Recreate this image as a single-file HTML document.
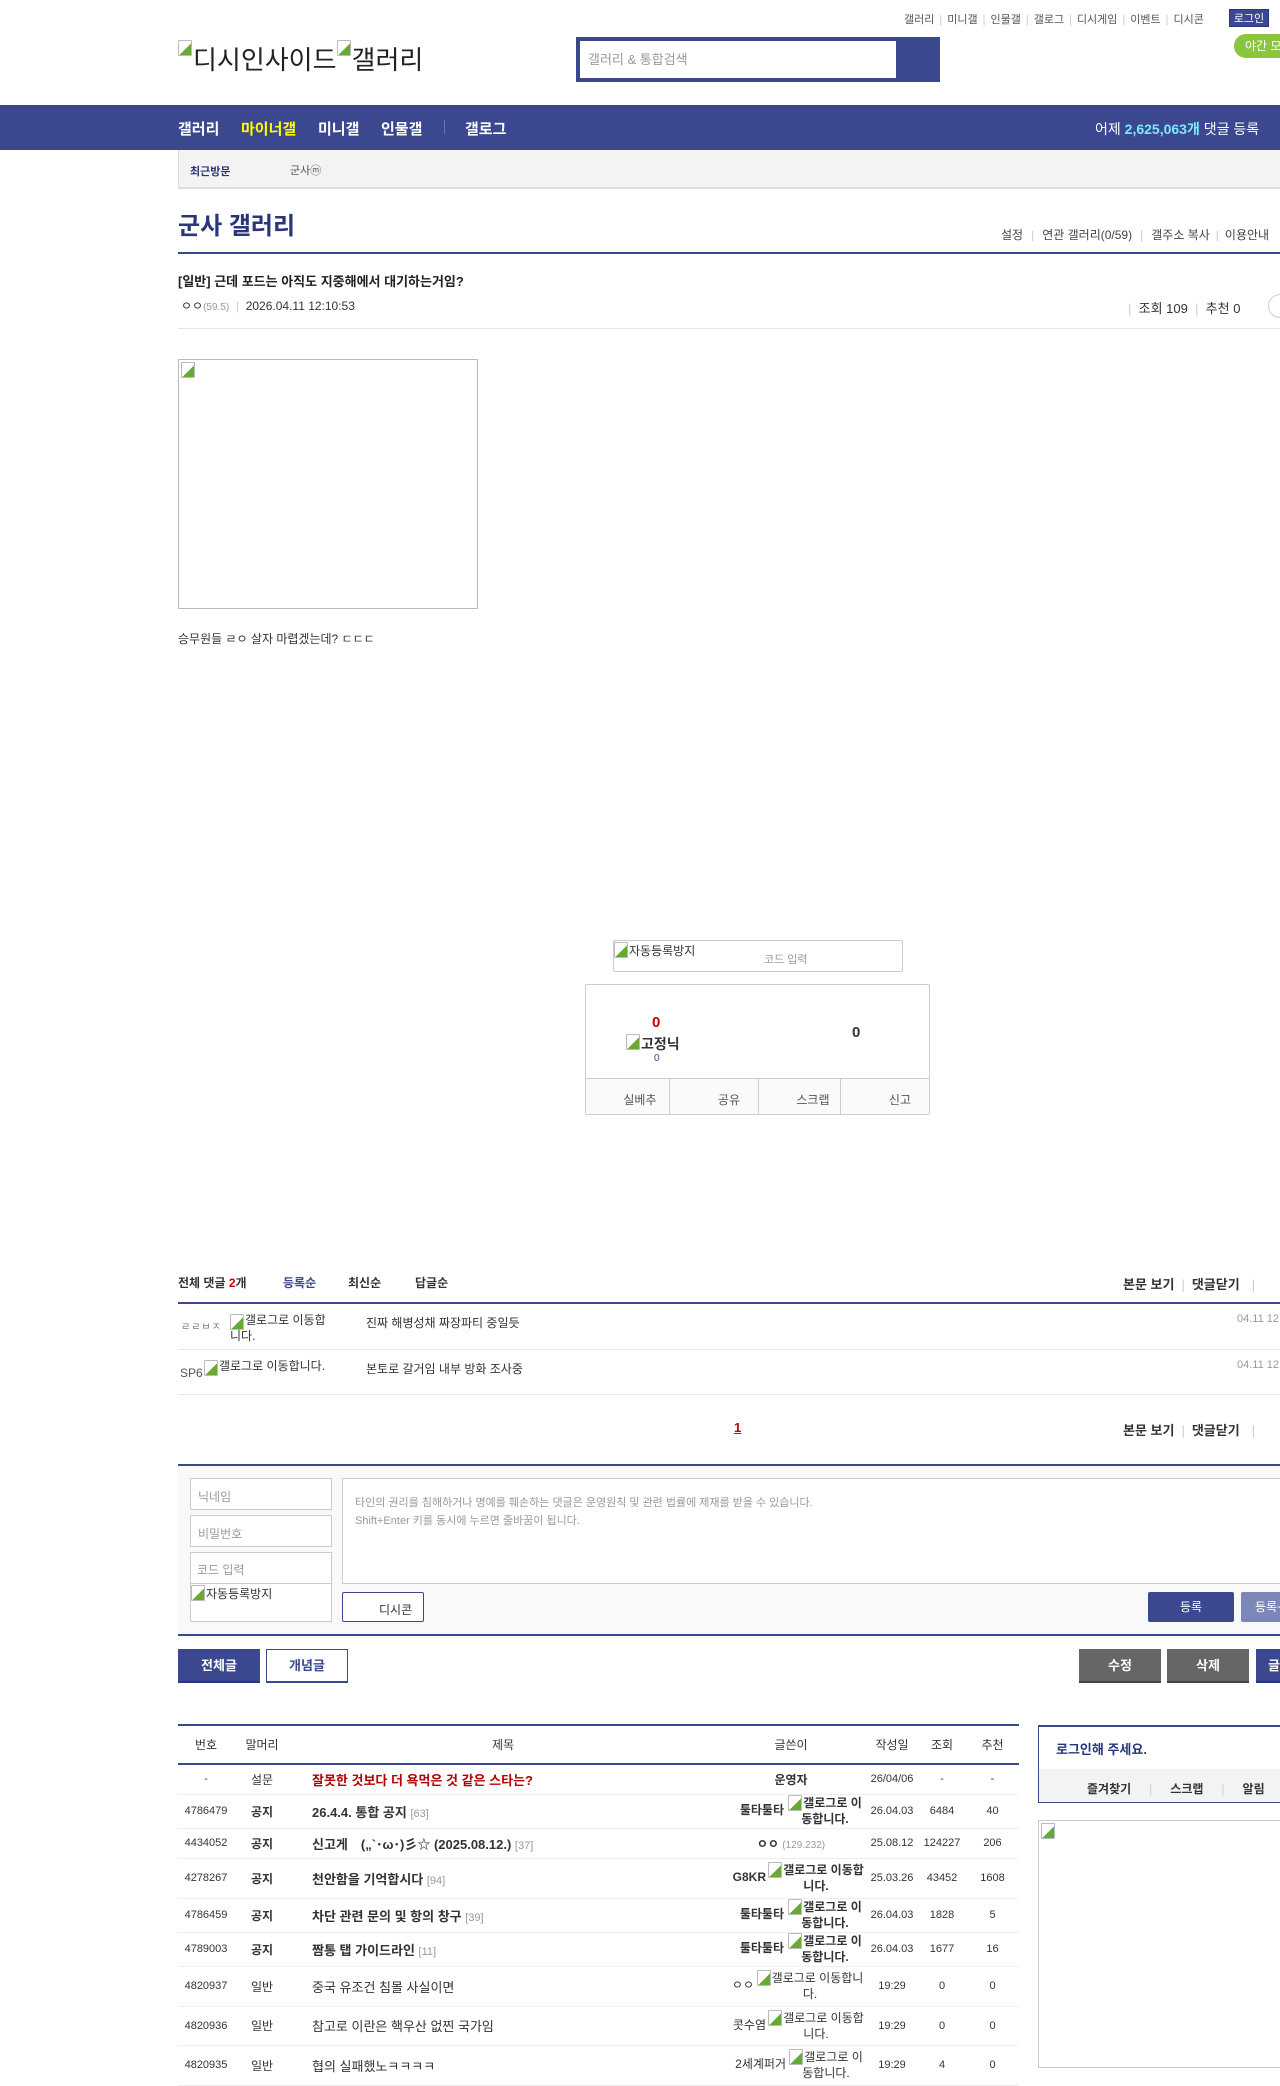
<!DOCTYPE html>
<html><head><meta charset="utf-8">
<style>
*{margin:0;padding:0;box-sizing:border-box}
body{width:1280px;height:2084px;overflow:hidden;position:relative;background:#fff;font-family:"Liberation Sans","Noto Sans CJK KR",sans-serif;color:#333;font-size:12px}
.a{position:absolute;white-space:nowrap}
.bi{display:inline-block;width:14px;height:16px;border:1px solid #bbb;border-radius:1px;vertical-align:top;margin-right:1px;background:linear-gradient(135deg,#fff 55%,#6a3 56%)}
.line{position:absolute;left:178px;right:0;height:2px;background:#3b4890}
.gl{position:absolute;left:178px;right:0;height:1px;background:#e5e5e5}
table{border-collapse:collapse;white-space:normal}
td{font-size:11px;color:#333;text-align:center;border-bottom:1px solid #eee;padding:0}
th{font-size:12px;font-weight:normal;color:#333;height:38px}
.tt{text-align:left;font-size:13px;padding-left:22px}
.b{font-weight:bold}
.wr{font-size:12px}
.g{display:inline-block;width:82px;text-align:center;vertical-align:middle;line-height:16px;font-size:12px}
.s{color:#ccc;font-weight:normal;margin:0 5px}
</style></head><body>
<!-- top links -->
<div class="a" style="left:904px;top:11px;font-size:11px;color:#555">갤러리<span class="s" style="margin:0 5px">|</span>미니갤<span class="s" style="margin:0 5px">|</span>인물갤<span class="s" style="margin:0 5px">|</span>갤로그<span class="s" style="margin:0 5px">|</span>디시게임<span class="s" style="margin:0 5px">|</span>이벤트<span class="s" style="margin:0 5px">|</span>디시콘</div>
<div class="a" style="left:1229px;top:9px;width:40px;height:18px;background:#3b4890;color:#fff;font-size:11px;text-align:center;line-height:18px;border:1px solid #29367c">로그인</div>
<div class="a" style="left:1234px;top:34px;width:60px;height:24px;background:#8bc53f;color:#fff;border-radius:12px;font-size:12px;line-height:24px;padding-left:11px">야간 모드</div>
<!-- logo -->
<div class="a" style="left:178px;top:40px;font-size:26px;color:#222"><span class="bi"></span>디시인사이드<span class="bi"></span>갤러리</div>
<!-- search -->
<div class="a" style="left:576px;top:37px;width:364px;height:45px;background:#3b4890"></div>
<div class="a" style="left:580px;top:41px;width:316px;height:37px;background:#fff;color:#999;font-size:13px;line-height:37px;padding-left:8px">갤러리 &amp; 통합검색</div>
<!-- nav -->
<div class="a" style="left:0;top:105px;width:1280px;height:45px;background:#3b4890"></div>
<div class="a" style="left:178px;top:118px;font-size:15px;font-weight:bold;color:#fff">갤러리</div>
<div class="a" style="left:241px;top:118px;font-size:15px;font-weight:bold;color:#ff0">마이너갤</div>
<div class="a" style="left:318px;top:118px;font-size:15px;font-weight:bold;color:#fff">미니갤</div>
<div class="a" style="left:381px;top:118px;font-size:15px;font-weight:bold;color:#fff">인물갤</div>
<div class="a" style="left:444px;top:120px;width:1px;height:14px;background:#6b78b8"></div>
<div class="a" style="left:465px;top:118px;font-size:15px;font-weight:bold;color:#fff">갤로그</div>
<div class="a" style="left:1095px;top:119px;font-size:14px;color:#fff">어제 <b style="color:#7fe7ff">2,625,063개</b> 댓글 등록</div>
<!-- recent -->
<div class="a" style="left:178px;top:150px;width:1110px;height:39px;background:#f3f3f3;border:1px solid #ddd;border-top:none;border-bottom:2px solid #ddd"></div>
<div class="a" style="left:190px;top:163px;font-size:11px;font-weight:bold;color:#29367c">최근방문</div>
<div class="a" style="left:290px;top:162px;font-size:11px;color:#555">군사ⓜ</div>
<!-- title -->
<div class="a" style="left:178px;top:206px;font-size:24px;font-weight:bold;color:#29367c">군사 갤러리</div>
<div class="a" style="left:1001px;top:226px;font-size:12px;color:#444">설정<span class="s" style="margin:0 8px">|</span>연관 갤러리(0/59)<span class="s" style="margin:0 8px">|</span>갤주소 복사<span class="s" style="margin:0 6px">|</span>이용안내</div>
<div class="line" style="top:252px"></div>
<!-- post -->
<div class="a" style="left:178px;top:271px;font-size:13px;font-weight:bold;color:#222">[일반] 근데 포드는 아직도 지중해에서 대기하는거임?</div>
<div class="a" style="left:181px;top:297px;font-size:12px;color:#333">ㅇㅇ<span style="font-size:10px;color:#999">(59.5)</span> <span style="color:#ccc">&nbsp;|&nbsp;</span> 2026.04.11 12:10:53</div>
<div class="a" style="left:1128px;top:298px;font-size:13px;color:#333"><span style="color:#ccc">|</span>&nbsp; 조회 109 <span style="color:#ccc">&nbsp;|&nbsp;</span> 추천 0</div>
<div class="a" style="left:1268px;top:294px;width:24px;height:24px;border:1px solid #ccc;border-radius:50%"></div>
<div class="gl" style="top:328px"></div>
<div class="a" style="left:178px;top:359px;width:300px;height:250px;border:1px solid #bbb"><span class="bi" style="margin:2px"></span></div>
<div class="a" style="left:178px;top:630px;font-size:12px;color:#333">승무원들 ㄹㅇ 살자 마렵겠는데? ㄷㄷㄷ</div>
<!-- captcha -->
<div class="a" style="left:613px;top:940px;width:290px;height:32px;border:1px solid #ccc;border-radius:2px"></div>
<div class="a" style="left:614px;top:942px;font-size:12px;color:#333"><span class="bi"></span>자동등록방지</div>
<div class="a" style="left:764px;top:951px;font-size:11px;color:#999">코드 입력</div>
<!-- recommend -->
<div class="a" style="left:585px;top:984px;width:345px;height:131px;border:1px solid #ccc;border-radius:2px"></div>
<div class="a" style="left:652px;top:1014px;font-size:15px;font-weight:bold;color:#c00">0</div>
<div class="a" style="left:626px;top:1034px;font-size:14px;font-weight:bold;color:#333"><span class="bi"></span>고정닉</div>
<div class="a" style="left:654px;top:1053px;font-size:10px;color:#3b4890">0</div>
<div class="a" style="left:852px;top:1024px;font-size:15px;font-weight:bold;color:#333">0</div>
<div class="a" style="left:586px;top:1078px;width:343px;height:36px;border-top:1px solid #ccc;display:flex;font-size:12px;color:#555;background:#fafafa">
<div style="flex:1;border-right:1px solid #ccc;text-align:right;padding:12px 12px 0 0">실베추</div>
<div style="flex:1;border-right:1px solid #ccc;text-align:right;padding:12px 18px 0 0">공유</div>
<div style="flex:1;border-right:1px solid #ccc;text-align:right;padding:12px 10px 0 0">스크랩</div>
<div style="flex:1;text-align:right;padding:12px 18px 0 0">신고</div></div>
<!-- comments -->
<div class="a" style="left:178px;top:1274px;font-size:12px;font-weight:bold;color:#333">전체 댓글 <span style="color:#c00">2</span>개</div>
<div class="a" style="left:283px;top:1274px;font-size:12px;font-weight:bold;color:#3b4890">등록순</div>
<div class="a" style="left:348px;top:1274px;font-size:12px;font-weight:bold">최신순</div>
<div class="a" style="left:415px;top:1274px;font-size:12px;font-weight:bold">답글순</div>
<div class="a" style="left:1123px;top:1274px;font-size:13px;font-weight:bold">본문 보기<span class="s" style="margin:0 7px">|</span>댓글닫기<span class="s" style="margin:0 12px">|</span></div>
<div class="line" style="top:1302px"></div>
<div class="a" style="left:181px;top:1318px;font-size:10px;color:#777;letter-spacing:1px">ㄹㄹㅂㅈ</div>
<div class="a" style="left:230px;top:1314px;font-size:12px;color:#333;line-height:13px;white-space:normal;width:100px"><span class="bi"></span>갤로그로 이동합니다.</div>
<div class="a" style="left:366px;top:1314px;font-size:12px;color:#333">진짜 해병성채 짜장파티 중일듯</div>
<div class="a" style="left:1237px;top:1313px;font-size:11px;color:#999">04.11 12:12:00</div>
<div class="gl" style="top:1349px"></div>
<div class="a" style="left:180px;top:1366px;font-size:12px;color:#555">SP6</div>
<div class="a" style="left:204px;top:1360px;font-size:12px;color:#333;line-height:13px;white-space:normal;width:126px"><span class="bi"></span>갤로그로 이동합니다.</div>
<div class="a" style="left:366px;top:1360px;font-size:12px;color:#333">본토로 갈거임 내부 방화 조사중</div>
<div class="a" style="left:1237px;top:1359px;font-size:11px;color:#999">04.11 12:13:00</div>
<div class="gl" style="top:1394px"></div>
<div class="a" style="left:734px;top:1420px;font-size:13px;font-weight:bold;color:#c00;text-decoration:underline">1</div>
<div class="a" style="left:1123px;top:1420px;font-size:13px;font-weight:bold">본문 보기<span class="s" style="margin:0 7px">|</span>댓글닫기<span class="s" style="margin:0 12px">|</span></div>
<!-- form -->
<div class="line" style="top:1464px"></div>
<div class="a" style="left:178px;top:1466px;width:1110px;height:168px;background:#f9f9f9"></div>
<div class="a" style="left:190px;top:1478px;width:142px;height:32px;border:1px solid #ccc;background:#fff;color:#999;font-size:12px;padding:9px 7px">닉네임</div>
<div class="a" style="left:190px;top:1515px;width:142px;height:32px;border:1px solid #ccc;background:#fff;color:#999;font-size:12px;padding:9px 7px">비밀번호</div>
<div class="a" style="left:190px;top:1552px;width:142px;height:70px;border:1px solid #ccc;background:#fff"></div>
<div class="a" style="left:190px;top:1552px;width:142px;height:32px;border-bottom:1px solid #ccc;color:#999;font-size:12px;padding:9px 7px">코드 입력</div>
<div class="a" style="left:191px;top:1585px;font-size:12px;color:#333"><span class="bi"></span>자동등록방지</div>
<div class="a" style="left:342px;top:1478px;width:960px;height:106px;border:1px solid #ccc;background:#fff;font-size:11px;color:#999;padding:15px 12px;line-height:18px;white-space:normal">타인의 권리를 침해하거나 명예를 훼손하는 댓글은 운영원칙 및 관련 법률에 제재를 받을 수 있습니다.<br>Shift+Enter 키를 동시에 누르면 줄바꿈이 됩니다.</div>
<div class="a" style="left:342px;top:1592px;width:82px;height:30px;border:1px solid #3b4890;border-radius:2px;background:#fff;font-size:12px;color:#333;padding:8px 0 0 36px">디시콘</div>
<div class="a" style="left:1148px;top:1592px;width:86px;height:30px;background:#3b4890;border-radius:2px;color:#fff;font-size:12px;text-align:center;line-height:30px">등록</div>
<div class="a" style="left:1241px;top:1592px;width:86px;height:30px;background:#7c86b8;border-radius:2px;color:#fff;font-size:12px;line-height:30px;padding-left:14px">등록+추천</div>
<div class="line" style="top:1634px"></div>
<!-- buttons -->
<div class="a" style="left:178px;top:1649px;width:82px;height:34px;background:#3b4890;border-bottom:2px solid #29367c;color:#fff;font-size:13px;font-weight:bold;text-align:center;line-height:33px">전체글</div>
<div class="a" style="left:266px;top:1649px;width:82px;height:34px;background:#fff;border:1px solid #3b4890;border-bottom:2px solid #3b4890;color:#3b4890;font-size:13px;font-weight:bold;text-align:center;line-height:31px">개념글</div>
<div class="a" style="left:1079px;top:1649px;width:82px;height:34px;background:#666;border-bottom:2px solid #444;color:#fff;font-size:13px;font-weight:bold;text-align:center;line-height:33px">수정</div>
<div class="a" style="left:1167px;top:1649px;width:82px;height:34px;background:#666;border-bottom:2px solid #444;color:#fff;font-size:13px;font-weight:bold;text-align:center;line-height:33px">삭제</div>
<div class="a" style="left:1256px;top:1649px;width:82px;height:34px;background:#3b4890;border-bottom:2px solid #29367c;color:#fff;font-size:13px;font-weight:bold;line-height:33px;padding-left:12px">글쓰기</div>
<!-- table -->
<div class="a" style="left:178px;top:1724px;width:841px;height:2px;background:#3b4890"></div>
<table class="a" style="left:178px;top:1726px;width:841px;table-layout:fixed;white-space:normal">
<colgroup><col style="width:56px"><col style="width:56px"><col style="width:426px"><col style="width:150px"><col style="width:52px"><col style="width:48px"><col style="width:53px"></colgroup>
<tr style="border-bottom:2px solid #3b4890"><th>번호</th><th>말머리</th><th>제목</th><th>글쓴이</th><th>작성일</th><th>조회</th><th>추천</th></tr>
<tr style="height:30px"><td>-</td><td class="wr">설문</td><td class="tt b" style="color:#b30000">잘못한 것보다 더 욕먹은 것 같은 스타는?</td><td class="wr b">운영자</td><td>26/04/06</td><td>-</td><td>-</td></tr>
<tr style="height:34px"><td>4786479</td><td class="wr b">공지</td><td class="tt b">26.4.4. 통합 공지 <span style="font-weight:normal;color:#999;font-size:11px">[63]</span></td><td class="wr b" style="text-align:right">툴타툴타<span class="g"><span class="bi"></span>갤로그로 이동합니다.</span></td><td>26.04.03</td><td>6484</td><td>40</td></tr>
<tr style="height:30px"><td>4434052</td><td class="wr b">공지</td><td class="tt b">신고게　(„`･ω･)彡☆ (2025.08.12.) <span style="font-weight:normal;color:#999;font-size:11px">[37]</span></td><td class="wr b">ㅇㅇ <span style="font-weight:normal;color:#999;font-size:10px">(129.232)</span></td><td>25.08.12</td><td>124227</td><td>206</td></tr>
<tr style="height:40px"><td>4278267</td><td class="wr b">공지</td><td class="tt b">천안함을 기억합시다 <span style="font-weight:normal;color:#999;font-size:11px">[94]</span></td><td class="wr b" style="text-align:right">G8KR<span class="g" style="width:100px"><span class="bi"></span>갤로그로 이동합니다.</span></td><td>25.03.26</td><td>43452</td><td>1608</td></tr>
<tr style="height:34px"><td>4786459</td><td class="wr b">공지</td><td class="tt b">차단 관련 문의 및 항의 창구 <span style="font-weight:normal;color:#999;font-size:11px">[39]</span></td><td class="wr b" style="text-align:right">툴타툴타<span class="g"><span class="bi"></span>갤로그로 이동합니다.</span></td><td>26.04.03</td><td>1828</td><td>5</td></tr>
<tr style="height:34px"><td>4789003</td><td class="wr b">공지</td><td class="tt b">짬통 탭 가이드라인 <span style="font-weight:normal;color:#999;font-size:11px">[11]</span></td><td class="wr b" style="text-align:right">툴타툴타<span class="g"><span class="bi"></span>갤로그로 이동합니다.</span></td><td>26.04.03</td><td>1677</td><td>16</td></tr>
<tr style="height:40px"><td>4820937</td><td class="wr">일반</td><td class="tt">중국 유조건 침몰 사실이면</td><td class="wr" style="text-align:right">ㅇㅇ<span class="g" style="width:112px"><span class="bi"></span>갤로그로 이동합니다.</span></td><td>19:29</td><td>0</td><td>0</td></tr>
<tr style="height:39px"><td>4820936</td><td class="wr">일반</td><td class="tt">참고로 이란은 핵우산 없찐 국가임</td><td class="wr" style="text-align:right">콧수염<span class="g" style="width:100px"><span class="bi"></span>갤로그로 이동합니다.</span></td><td>19:29</td><td>0</td><td>0</td></tr>
<tr style="height:40px"><td>4820935</td><td class="wr">일반</td><td class="tt">협의 실패했노ㅋㅋㅋㅋ</td><td class="wr" style="text-align:right">2세계퍼거<span class="g" style="width:80px"><span class="bi"></span>갤로그로 이동합니다.</span></td><td>19:29</td><td>4</td><td>0</td></tr>
</table>
<!-- sidebar -->
<div class="a" style="left:1038px;top:1725px;width:260px;height:78px;border:1px solid #3b4890;border-top:2px solid #3b4890"></div>
<div class="a" style="left:1056px;top:1739px;font-size:13px;font-weight:bold;color:#29367c">로그인해 주세요.</div>
<div class="a" style="left:1039px;top:1769px;width:258px;height:33px;background:#f3f3f3"></div>
<div class="a" style="left:1087px;top:1780px;font-size:12px;font-weight:bold;color:#333">즐겨찾기<span class="s" style="margin:0 18px">|</span>스크랩<span class="s" style="margin:0 18px">|</span>알림</div>
<div class="a" style="left:1038px;top:1820px;width:260px;height:248px;border:1px solid #ccc"><span class="bi" style="margin:2px"></span></div>
</body></html>
